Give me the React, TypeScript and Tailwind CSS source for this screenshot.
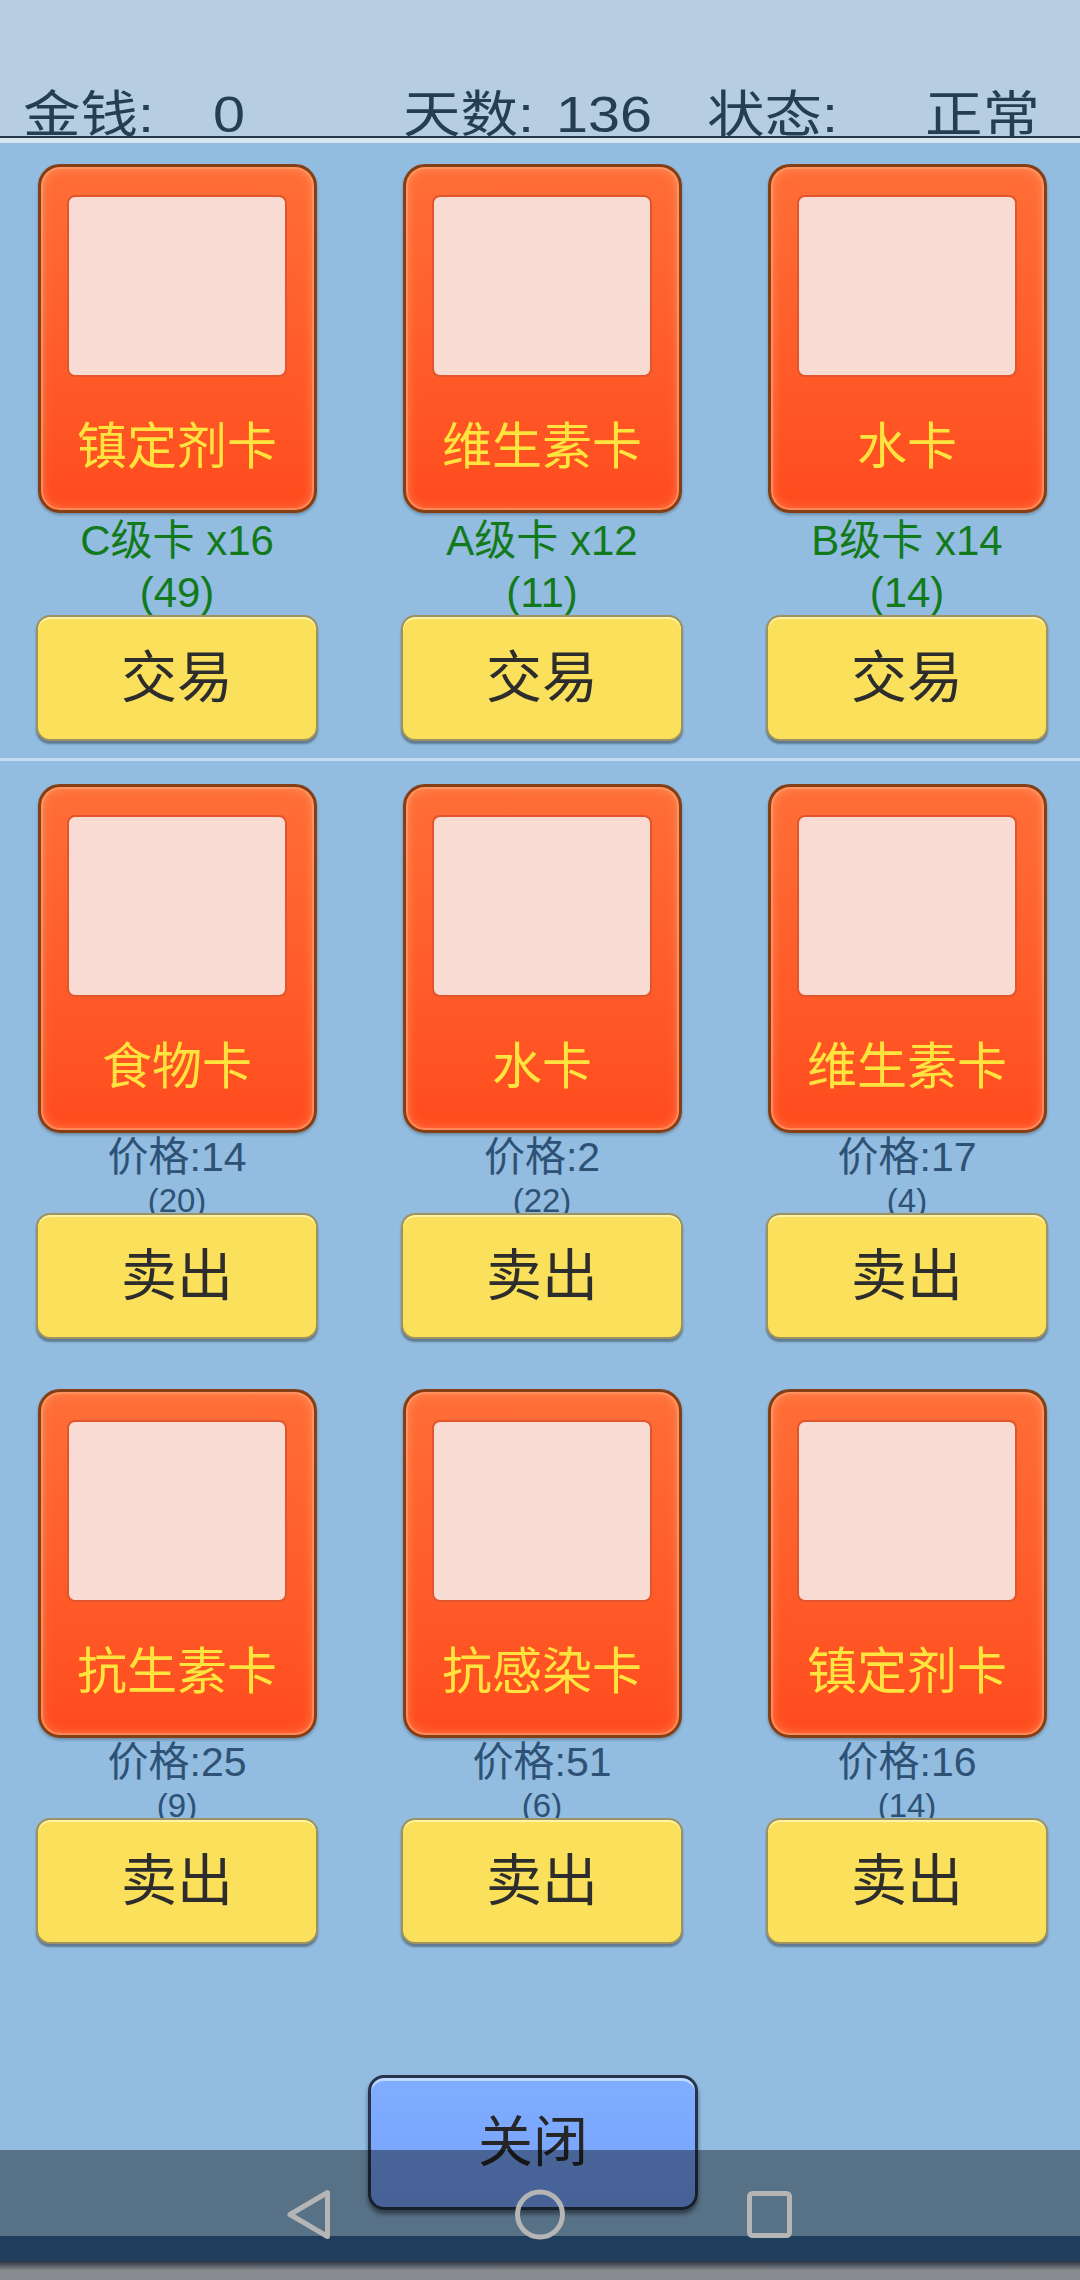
import React from 'react';

const tradeCards = [
  { name: '镇定剂卡', grade: 'C级卡 x16', count: '(49)' },
  { name: '维生素卡', grade: 'A级卡 x12', count: '(11)' },
  { name: '水卡', grade: 'B级卡 x14', count: '(14)' },
];

const sellRows = [
  [
    { name: '食物卡', price: '价格:14', count: '(20)' },
    { name: '水卡', price: '价格:2', count: '(22)' },
    { name: '维生素卡', price: '价格:17', count: '(4)' },
  ],
  [
    { name: '抗生素卡', price: '价格:25', count: '(9)' },
    { name: '抗感染卡', price: '价格:51', count: '(6)' },
    { name: '镇定剂卡', price: '价格:16', count: '(14)' },
  ],
];

function Card({ name }: { name: string }) {
  return (
    <div className="w-[279px] h-[349px] shrink-0 rounded-[22px] border-[3px] border-[#843f16] bg-linear-to-b from-[#ff6e37] to-[#ff4b1d] shadow-[inset_0_0_0_2px_rgba(255,160,110,0.6),inset_0_0_12px_rgba(255,190,140,0.55),0_2px_3px_rgba(0,0,0,0.25)] flex flex-col items-center pt-[28px]">
      <div className="w-[220px] h-[182px] rounded-[8px] bg-[#f8dbd2] border-2 border-[#e0552b]" />
      <div className="mt-[45px] text-[50px] leading-[50px] text-[#ffe33f] whitespace-nowrap">{name}</div>
    </div>
  );
}

function YellowButton({ label }: { label: string }) {
  return (
    <button className="relative w-[282px] h-[126px] shrink-0 rounded-[14px] bg-[#fbe15b] border-2 border-[#9d9262] shadow-[inset_0_2px_0_#fff3a8,0_3px_2px_rgba(0,0,0,0.35)] text-[56px] leading-none text-[#2d2d2d]">
      {label}
    </button>
  );
}

export default function App() {
  return (
    <div className="relative w-[1080px] h-[2280px] overflow-hidden bg-[#92bce0] font-['Liberation_Sans','Noto_Sans_CJK_SC',sans-serif]">
      {/* status header */}
      <div className="h-[138px] bg-[#b7cde2] flex items-end pl-[23px] text-[50px] leading-none text-[#243f4f] border-b-2 border-[#23394a]">
        <span className="w-[190px] mb-[-4px]"><span className="inline-block origin-left scale-x-[1.15]">金钱:</span></span>
        <span className="w-[190px] mb-[-4px]"><span className="inline-block origin-left scale-x-[1.15]">0</span></span>
        <span className="w-[153px] mb-[-4px]"><span className="inline-block origin-left scale-x-[1.15]">天数:</span></span>
        <span className="w-[151px] mb-[-4px]"><span className="inline-block origin-left scale-x-[1.15]">136</span></span>
        <span className="w-[218px] mb-[-4px]"><span className="inline-block origin-left scale-x-[1.15]">状态:</span></span>
        <span className="mb-[-4px]"><span className="inline-block origin-left scale-x-[1.15]">正常</span></span>
      </div>
      <div className="h-[5px] bg-[#d8e6f2]" />

      {/* trade row */}
      <div className="pt-[21px] pl-[36px] grid grid-cols-[282px_282px_282px] gap-x-[83px]">
        {tradeCards.map((c) => (
          <div key={c.grade} className="flex flex-col items-center">
            <Card name={c.name} />
            <div className="mt-[2px] text-[42px] leading-[52px] text-[#137a1c] text-center whitespace-nowrap">
              <div>{c.grade}</div>
              <div>{c.count}</div>
            </div>
            <div className="mt-[-4px]">
              <YellowButton label="交易" />
            </div>
          </div>
        ))}
      </div>

      <div className="mt-[17px] h-[3px] bg-[#c6dbef]" />

      {/* sell rows */}
      <div className="pt-[23px] pl-[36px] flex flex-col gap-y-[50px]">
        {sellRows.map((row, i) => (
          <div key={i} className="grid grid-cols-[282px_282px_282px] gap-x-[83px]">
            {row.map((c) => (
              <div key={c.name + c.price} className="flex flex-col items-center">
                <Card name={c.name} />
                <div className="mt-[3px] text-[41px] leading-[42px] text-[#2e5275] whitespace-nowrap">{c.price}</div>
                <div className="mt-[6px] text-[33px] leading-[33px] text-[#2e5275]">{c.count}</div>
                <div className="mt-[-4px]">
                  <YellowButton label="卖出" />
                </div>
              </div>
            ))}
          </div>
        ))}
      </div>

      {/* close */}
      <div className="mt-[131px] pl-[368px]">
        <button className="w-[330px] h-[135px] rounded-[16px] border-[3px] border-[#25344a] bg-linear-to-b from-[#80adff] to-[#76a3fb] shadow-[inset_0_3px_0_rgba(220,235,255,0.7),0_4px_4px_rgba(0,0,0,0.45)] text-[55px] leading-none text-[#262626]">
          关闭
        </button>
      </div>

      {/* system nav bar overlay */}
      <div className="absolute left-0 right-0 top-[2150px] flex flex-col">
        <div className="h-[86px] bg-black/40" />
        <div className="h-[25px] bg-[#1f3d5c]" />
        <div className="h-[19px] bg-linear-to-b from-[#2c3440] via-[#888c90] to-[#8a8e92]" />
      </div>
      <svg
        className="absolute left-0 top-[2180px]"
        width="1080"
        height="70"
        viewBox="0 2180 1080 70"
        fill="none"
        stroke="#b5b5b5"
        strokeWidth="5"
        strokeLinejoin="round"
      >
        <polygon points="290,2214.5 327.5,2192.5 327.5,2236.5" />
        <circle cx="540" cy="2214.5" r="22.5" />
        <rect x="749.5" y="2193.5" width="40" height="42" rx="3" />
      </svg>
    </div>
  );
}
